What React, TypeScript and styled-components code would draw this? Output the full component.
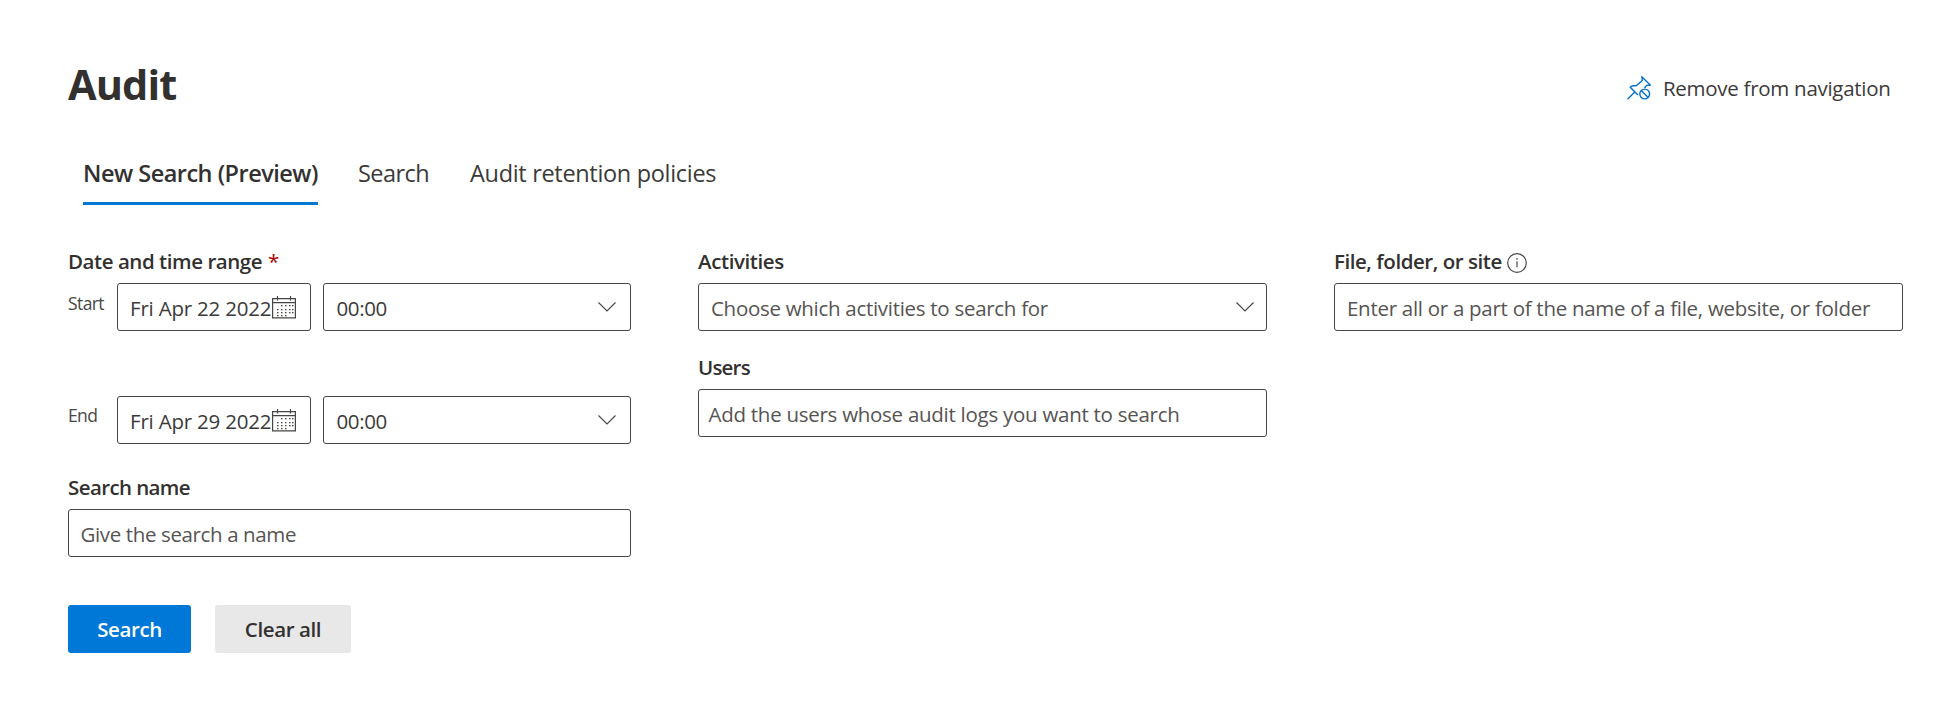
import React from "react";
import styled, { createGlobalStyle } from "styled-components";

const GlobalStyle = createGlobalStyle`
  * { box-sizing: border-box; }
  body {
    margin: 0;
    background: #fff;
    color: #323130;
    font-family: "Open Sans", "Noto Sans", sans-serif;
    font-size: 20.5px;
  }
`;

const Page = styled.main`
  min-height: 726px;
  padding: 56px 55px 0 68px;
`;

const Header = styled.header`
  display: flex;
  justify-content: space-between;
  height: 56px;
`;

const Title = styled.h1`
  margin: 0;
  font-size: 41.5px;
  line-height: 56px;
  font-weight: 700;
  letter-spacing: -0.9px;
`;

const NavAction = styled.a`
  display: flex;
  gap: 12px;
  width: 276px;
  margin: 18px 0 0;
  line-height: 28px;
  letter-spacing: -0.28px;
  white-space: nowrap;
  color: #3b3a39;

  svg { margin-top: 2px; flex: none; }
`;

const Tabs = styled.nav`
  display: flex;
  gap: 40px;
  margin-top: 41px;
  padding-left: 15px;
`;

const Tab = styled.a<{ $active?: boolean; $width: number; $tracking: number }>`
  width: ${(p) => p.$width}px;
  height: 52px;
  border-bottom: 3px solid ${(p) => (p.$active ? "#0078d4" : "transparent")};
  font-size: 23.5px;
  line-height: 40px;
  font-weight: ${(p) => (p.$active ? 600 : 400)};
  letter-spacing: ${(p) => p.$tracking}px;
  color: ${(p) => (p.$active ? "#323130" : "#3b3a39")};
  white-space: nowrap;
`;

const Form = styled.form`
  display: grid;
  grid-template-columns: 563px 569px 569px;
  column-gap: 67px;
  margin-top: 41px;
`;

const Column = styled.section`
  display: flex;
  flex-direction: column;
`;

const Label = styled.label<{ $tracking: number; $space?: number }>`
  display: flex;
  height: 30px;
  margin: ${(p) => p.$space ?? 0}px 0 7px;
  line-height: 30px;
  font-weight: 600;
  letter-spacing: ${(p) => p.$tracking}px;
  white-space: pre;
`;

const Required = styled.span`
  margin-left: 6px;
  font-weight: 400;
  color: #a80000;
`;

const InfoSlot = styled.span`
  display: flex;
  margin: 7px 0 0 5px;
`;

const Row = styled.div<{ $space?: number }>`
  display: grid;
  grid-template-columns: 49px 194px 320px;
  margin-top: ${(p) => p.$space ?? 0}px;
`;

const Side = styled.span<{ $top: number }>`
  margin-top: ${(p) => p.$top}px;
  font-size: 17.5px;
  line-height: 24px;
  letter-spacing: -0.6px;
  color: #484644;
`;

const Field = styled.div<{ $pad: number; $tracking: number; $muted?: boolean; $offset?: number }>`
  display: flex;
  justify-content: space-between;
  height: 48px;
  margin-left: ${(p) => p.$offset ?? 0}px;
  padding: 2px 0 0 ${(p) => p.$pad}px;
  border: 1px solid #484644;
  border-radius: 3px;
  line-height: 44px;
  letter-spacing: ${(p) => p.$tracking}px;
  color: ${(p) => (p.$muted ? "#565452" : "#3b3a39")};
  white-space: nowrap;

  svg { flex: none; }
`;

const Actions = styled.div`
  display: flex;
  gap: 24px;
  margin-top: 48px;
`;

const Button = styled.button<{ $primary?: boolean; $width: number }>`
  width: ${(p) => p.$width}px;
  height: 48px;
  padding: 0;
  border: 0;
  border-radius: 3px;
  background: ${(p) => (p.$primary ? "#0078d7" : "#e8e8e8")};
  color: ${(p) => (p.$primary ? "#fff" : "#323130")};
  font: 600 20.5px/48px "Open Sans", sans-serif;
  letter-spacing: -0.4px;
`;

const CalendarSvg = styled.svg`
  margin: 10px 14px 0 0;
`;

const ChevronSvg = styled.svg<{ $right: number }>`
  margin: 15px ${(p) => p.$right}px 0 0;
`;

function Calendar() {
  const dots = [
    [9, 9], [13, 9], [17, 9], [20, 9],
    [5, 13], [9, 13], [13, 13], [17, 13], [20, 13],
    [5, 16], [9, 16], [13, 16], [17, 16], [20, 16],
    [5, 19], [9, 19], [13, 19],
  ];
  return (
    <CalendarSvg width="24" height="23" viewBox="0 0 24 23" fill="none" stroke="#484644" strokeWidth="1.2">
      <path d="M.6 2.6h22.8v19.3H.6zM.6 6.6h22.8M5.5 0v4.5M18.5 0v4.5" />
      {dots.map(([x, y]) => (
        <rect key={`${x}-${y}`} x={x} y={y} width="1.5" height="1.3" fill="#484644" stroke="none" />
      ))}
    </CalendarSvg>
  );
}

function Chevron({ right }: { right: number }) {
  return (
    <ChevronSvg $right={right} width="18" height="11" viewBox="0 0 18 11" fill="none" stroke="#484644" strokeWidth="1.1">
      <path d="M.5 1.5 9 10 17.5 1.5" />
    </ChevronSvg>
  );
}

export default function App() {
  return (
    <Page>
      <GlobalStyle />
      <Header>
        <Title>Audit</Title>
        <NavAction>
          <svg width="24" height="24" viewBox="0 0 24 24" fill="none" stroke="#0072c9" strokeWidth="1.4">
            <path d="M.5 23.3 7.5 16.3M11 19 3.3 11.3 5 10 9.5 9.5 15.3 4.5 15 1l8.300 8-3.500.3-2.300 2.700" />
            <circle cx="17.7" cy="18" r="4.9" />
            <path d="m14.3 14.6 6.8 6.8" />
          </svg>
          Remove from navigation
        </NavAction>
      </Header>
      <Tabs>
        <Tab $active $width={235} $tracking={-0.5}>New Search (Preview)</Tab>
        <Tab $width={72} $tracking={-0.55}>Search</Tab>
        <Tab $width={247} $tracking={-0.317}>Audit retention policies</Tab>
      </Tabs>
      <Form>
        <Column>
          <Label $tracking={-0.45}>
            Date and time range<Required>*</Required>
          </Label>
          <Row>
            <Side $top={8}>Start</Side>
            <Field $pad={12} $tracking={-0.2}>
              Fri Apr 22 2022
              <Calendar />
            </Field>
            <Field $pad={12.5} $tracking={-0.4} $offset={12}>
              00:00
              <Chevron right={14} />
            </Field>
          </Row>
          <Row $space={65}>
            <Side $top={7}>End</Side>
            <Field $pad={12} $tracking={-0.2}>
              Fri Apr 29 2022
              <Calendar />
            </Field>
            <Field $pad={12.5} $tracking={-0.4} $offset={12}>
              00:00
              <Chevron right={14} />
            </Field>
          </Row>
          <Label $space={28} $tracking={-0.6}>Search name</Label>
          <Field $pad={11.5} $tracking={-0.375} $muted>Give the search a name</Field>
          <Actions>
            <Button type="button" $primary $width={123}>Search</Button>
            <Button type="button" $width={136}>Clear all</Button>
          </Actions>
        </Column>
        <Column>
          <Label $tracking={-0.4}>Activities</Label>
          <Field $pad={12} $tracking={-0.29} $muted>
            Choose which activities to search for
            <Chevron right={12} />
          </Field>
          <Label $space={21} $tracking={-0.8}>Users</Label>
          <Field $pad={9.5} $tracking={-0.27} $muted>Add the users whose audit logs you want to search</Field>
        </Column>
        <Column>
          <Label $tracking={-0.45}>
            File, folder, or site
            <InfoSlot>
              <svg width="20" height="20" viewBox="0 0 20 20" fill="none" stroke="#484644" strokeWidth="1.2">
                <circle cx="10" cy="10" r="9.3" />
                <path d="M10 8.2v6M10 5v1.700" />
              </svg>
            </InfoSlot>
          </Label>
          <Field $pad={12} $tracking={-0.28} $muted>Enter all or a part of the name of a file, website, or folder</Field>
        </Column>
      </Form>
    </Page>
  );
}
